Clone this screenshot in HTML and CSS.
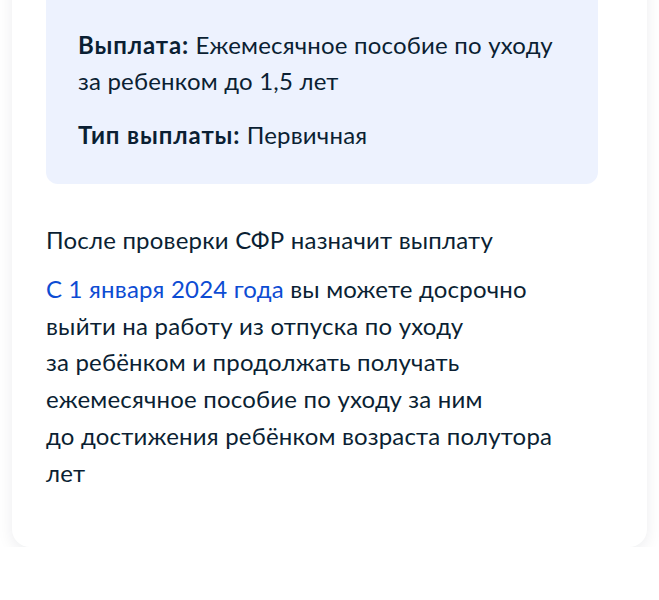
FILE: index.html
```html
<!DOCTYPE html>
<html lang="ru">
<head>
    <meta charset="UTF-8">
    <title>Выплата</title>
    <link rel="stylesheet" href="styles.css">
</head>
<body>
    <div class="page">
        <div class="card">
            <div class="content">
                <div class="info">
                    <p class="info-row"><b>Выплата:</b> Ежемесячное пособие по уходу за&nbsp;ребенком до&nbsp;1,5&nbsp;лет</p>
                    <p class="info-row"><b>Тип выплаты:</b> Первичная</p>
                </div>
                <p class="text">После проверки СФР назначит выплату</p>
                <p class="text"><a href="#" class="link">С 1 января 2024 года</a> вы можете досрочно выйти на работу из отпуска по уходу за&nbsp;ребёнком и продолжать получать ежемесячное пособие по уходу за&nbsp;ним до&nbsp;достижения ребёнком возраста полутора лет</p>
            </div>
        </div>
    </div>
</body>
</html>
```

FILE: styles.css
```css
body {
    margin: 0;
    padding: 0;
    background-color: #fff;
    font-family: Lato, "Noto Sans", sans-serif;
    color: #0b1f33;
}
.page {
    padding: 0 12px;
    margin-top: -40px;
}
.card {
    background-color: #fff;
    border-radius: 0 0 18px 18px;
    box-shadow: 0 4px 16px rgba(11, 31, 51, 0.08);
    padding: 0 34px 43px 34px;
}
.content {
    max-width: 552px;
}
.info {
    background-color: #edf2fe;
    border-radius: 0 0 12px 12px;
    padding: 67px 32px 13px 32px;
    margin-bottom: 38px;
}
.info-row {
    margin: 0 0 18px 0;
    font-size: 24px;
    line-height: 36px;
    letter-spacing: 0.2px;
}
.info-row b {
    font-weight: 700;
    letter-spacing: 0.9px;
}
.text {
    max-width: 524px;
    margin: 0 0 12px 0;
    font-size: 24px;
    line-height: 36.8px;
    letter-spacing: 0.2px;
}
.link {
    color: #0d4cd3;
    text-decoration: none;
}
```
